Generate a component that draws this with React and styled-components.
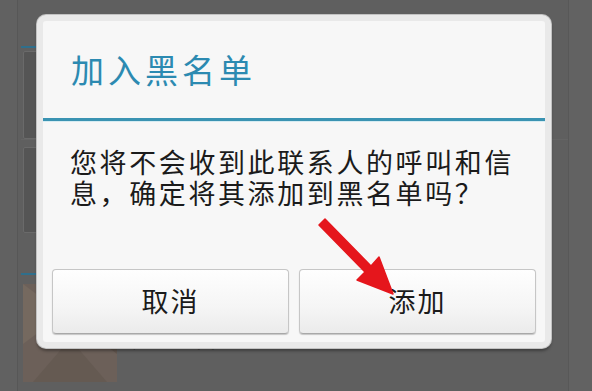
import React from "react";
import styled, { createGlobalStyle } from "styled-components";

const Global = createGlobalStyle`
  html, body { margin: 0; padding: 0; background: #5f5f5f; }
  body { font-family: "Noto Sans CJK SC", "Noto Sans", sans-serif; }
`;

const Screen = styled.div`
  position: relative;
  width: 592px;
  height: 391px;
  overflow: hidden;
  background: #5f5f5f;
  display: flex;
`;

const LeftEdge = styled.div`
  width: 17px;
  flex: none;
  background: #616161;
  border-right: 1px solid #575757;
`;

const List = styled.div`
  flex: 1;
  display: flex;
  flex-direction: column;
  padding: 46px 0 0 3px;
`;

const SectionLine = styled.div`
  width: 90px;
  height: 2px;
  flex: none;
  background: #2f6f8c;
`;

const Row = styled.div`
  display: flex;
  align-items: flex-end;
  gap: 14px;
  padding: ${(p) => p.$pad || "3px 0 0 2px"};
  border-bottom: 1px solid ${(p) => p.$line || "transparent"};
`;

const GrayAvatar = styled.div`
  width: 96px;
  height: ${(p) => p.$h}px;
  background: #555555;
  border: 1px solid #6a6a6a;
  border-radius: 2px;
`;

const PhotoAvatar = styled.svg`
  width: 94px;
  height: 98px;
  display: block;
  flex: none;
`;

const RowName = styled.div`
  font-size: 27px;
  line-height: 27px;
  color: #111;
  letter-spacing: 3px;
  margin-bottom: 33px;
`;

const RightStrip = styled.div`
  width: 23px;
  flex: none;
  background: #626262;
  border-left: 1px solid #585858;
`;

const Dialog = styled.div`
  position: absolute;
  left: 37px;
  top: 15px;
  width: 502px;
  height: 321px;
  border: 6px solid #e9e9e9;
  border-radius: 9px;
  background: #f7f7f7;
  box-shadow: 0 0 0 1px #c2c2c2, 0 3px 3px rgba(0, 0, 0, 0.35);
  display: flex;
  flex-direction: column;
`;

const TitleBar = styled.div`
  height: 97px;
  display: flex;
  align-items: center;
  padding-left: 28px;
`;

const Title = styled.h1`
  margin: 0;
  font-size: 33px;
  font-weight: 400;
  letter-spacing: 4px;
  color: #2c8ab1;
  line-height: 1;
`;

const Divider = styled.div`
  height: 3px;
  background: #3a93b2;
  border-bottom: 1px solid #d6ecf2;
`;

const Message = styled.p`
  margin: 0;
  flex: 1;
  padding: 24px 20px 0 27px;
  font-size: 27px;
  line-height: 31px;
  letter-spacing: 2.6px;
  color: #1b1b1b;
  font-family: "Noto Sans CJK SC", sans-serif;
`;

const Buttons = styled.div`
  display: flex;
  gap: 10px;
  padding: 0 9px 8px 9px;
`;

const Button = styled.button`
  flex: 1;
  height: 65px;
  font-family: "Noto Sans CJK SC", sans-serif;
  font-size: 27px;
  letter-spacing: 2px;
  color: #1b1b1b;
  background: linear-gradient(#fefefe, #f5f5f5 60%, #ebebeb);
  border: 1px solid #c6c6c6;
  border-bottom-color: #a8a8a8;
  border-radius: 4px;
  box-shadow: 0 1px 1px rgba(0, 0, 0, 0.2);
  padding: 0 0 2px 0;
`;

const Arrow = styled.svg`
  position: absolute;
  left: 0;
  top: 0;
  width: 592px;
  height: 391px;
  pointer-events: none;
`;

export default function App() {
  return (
    <>
      <Global />
      <Screen>
        <LeftEdge />
        <List>
          <SectionLine />
          <Row $pad="3px 0 0 2px" $line="#646464">
            <GrayAvatar $h={86} />
          </Row>
          <Row $pad="7px 0 39px 2px">
            <GrayAvatar $h={84} />
          </Row>
          <SectionLine />
          <Row $pad="9px 0 0 2px">
            <PhotoAvatar viewBox="0 0 94 98">
              <rect width="94" height="98" fill="#6c6059" />
              <polygon points="0,0 40,30 0,60" fill="#75695f" />
              <polygon points="94,10 55,40 94,70" fill="#62574f" />
              <polygon points="10,98 47,55 84,98" fill="#655a52" />
            </PhotoAvatar>
            <RowName>分组名</RowName>
          </Row>
        </List>
        <RightStrip />
        <Dialog>
          <TitleBar>
            <Title>加入黑名单</Title>
          </TitleBar>
          <Divider />
          <Message>您将不会收到此联系人的呼叫和信息，确定将其添加到黑名单吗？</Message>
          <Buttons>
            <Button>取消</Button>
            <Button>添加</Button>
          </Buttons>
        </Dialog>
        <Arrow viewBox="0 0 592 391">
          <polygon
            points="319,225 325,219 371,266 379,257 393,294 357,280 365,272"
            fill="#e5161c"
            stroke="#e5161c"
            strokeWidth="1.5"
            strokeLinejoin="round"
          />
        </Arrow>
      </Screen>
    </>
  );
}
